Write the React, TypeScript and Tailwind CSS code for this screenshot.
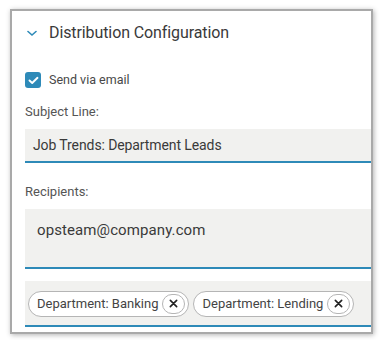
import React from "react";

function Chip({ label }: { label: string }) {
  return (
    <div className="flex items-center h-[26px] rounded-full border border-[#b5b5b5] bg-white pl-[8px] pr-[3px] gap-[4px]">
      <span className="text-[13px] text-[#444] leading-none">{label}</span>
      <span className="flex items-center justify-center w-[23px] h-[20px] rounded-full border border-[#b5b5b5] bg-white">
        <svg width="9" height="9" viewBox="0 0 10 10">
          <path d="M1.5 1.5 L8.5 8.5 M8.5 1.5 L1.5 8.5" stroke="#222" strokeWidth="1.8" strokeLinecap="round" />
        </svg>
      </span>
    </div>
  );
}

export default function App() {
  return (
    <div className="w-[382px] h-[340px] bg-white pt-[9px] pl-[10px]" style={{ fontFamily: "Roboto, 'Liberation Sans', sans-serif" }}>
      <div className="w-[363px] h-[325px] border-2 border-[#a9a9a9] bg-white shadow-[1px_1px_5px_rgba(0,0,0,0.3)] overflow-hidden flex flex-col pl-[13px]">
        <div className="flex items-center h-[44px] gap-[12px] pl-[2px]">
          <svg width="10" height="7" viewBox="0 0 10 7">
            <path d="M1 1.5 L5 5 L9 1.5" stroke="#2e8ab8" strokeWidth="1.6" fill="none" strokeLinecap="round" />
          </svg>
          <span className="text-[16px] text-[#3a3a3a] tracking-[-0.1px]">Distribution Configuration</span>
        </div>
        <div className="flex items-center gap-[8px] mt-[17px] h-[16px]">
          <span className="flex items-center justify-center w-[16px] h-[16px] rounded-[3px] bg-[#2e8ab8]">
            <svg width="11" height="9" viewBox="0 0 11 9">
              <path d="M1.5 4.5 L4.2 7 L9.5 1.8" stroke="white" strokeWidth="1.9" fill="none" strokeLinecap="round" strokeLinejoin="round" />
            </svg>
          </span>
          <span className="text-[12.5px] text-[#484848]">Send via email</span>
        </div>
        <div className="text-[13px] text-[#555] mt-[16px] leading-[16px]">Subject Line:</div>
        <div className="mt-[9px] h-[34px] bg-[#f1f1ef] border-b-2 border-[#2e8ab8] flex items-center pl-[8px]">
          <span className="text-[14px] text-[#3a3a3a] tracking-[-0.1px]">Job Trends: Department Leads</span>
        </div>
        <div className="text-[13px] text-[#555] mt-[21px] leading-[16px]">Recipients:</div>
        <div className="mt-[9px] h-[60px] bg-[#f1f1ef] border-b-2 border-[#2e8ab8] pl-[12px] pt-[9px]">
          <span className="text-[15px] text-[#3a3a3a] tracking-[0.1px]">opsteam@company.com</span>
        </div>
        <div className="mt-[12px] h-[46px] bg-[#f1f1ef] border-b-2 border-[#2e8ab8] flex items-center gap-[4px] pl-[3px] pt-[1px]">
          <Chip label="Department: Banking" />
          <Chip label="Department: Lending" />
        </div>
      </div>
    </div>
  );
}
